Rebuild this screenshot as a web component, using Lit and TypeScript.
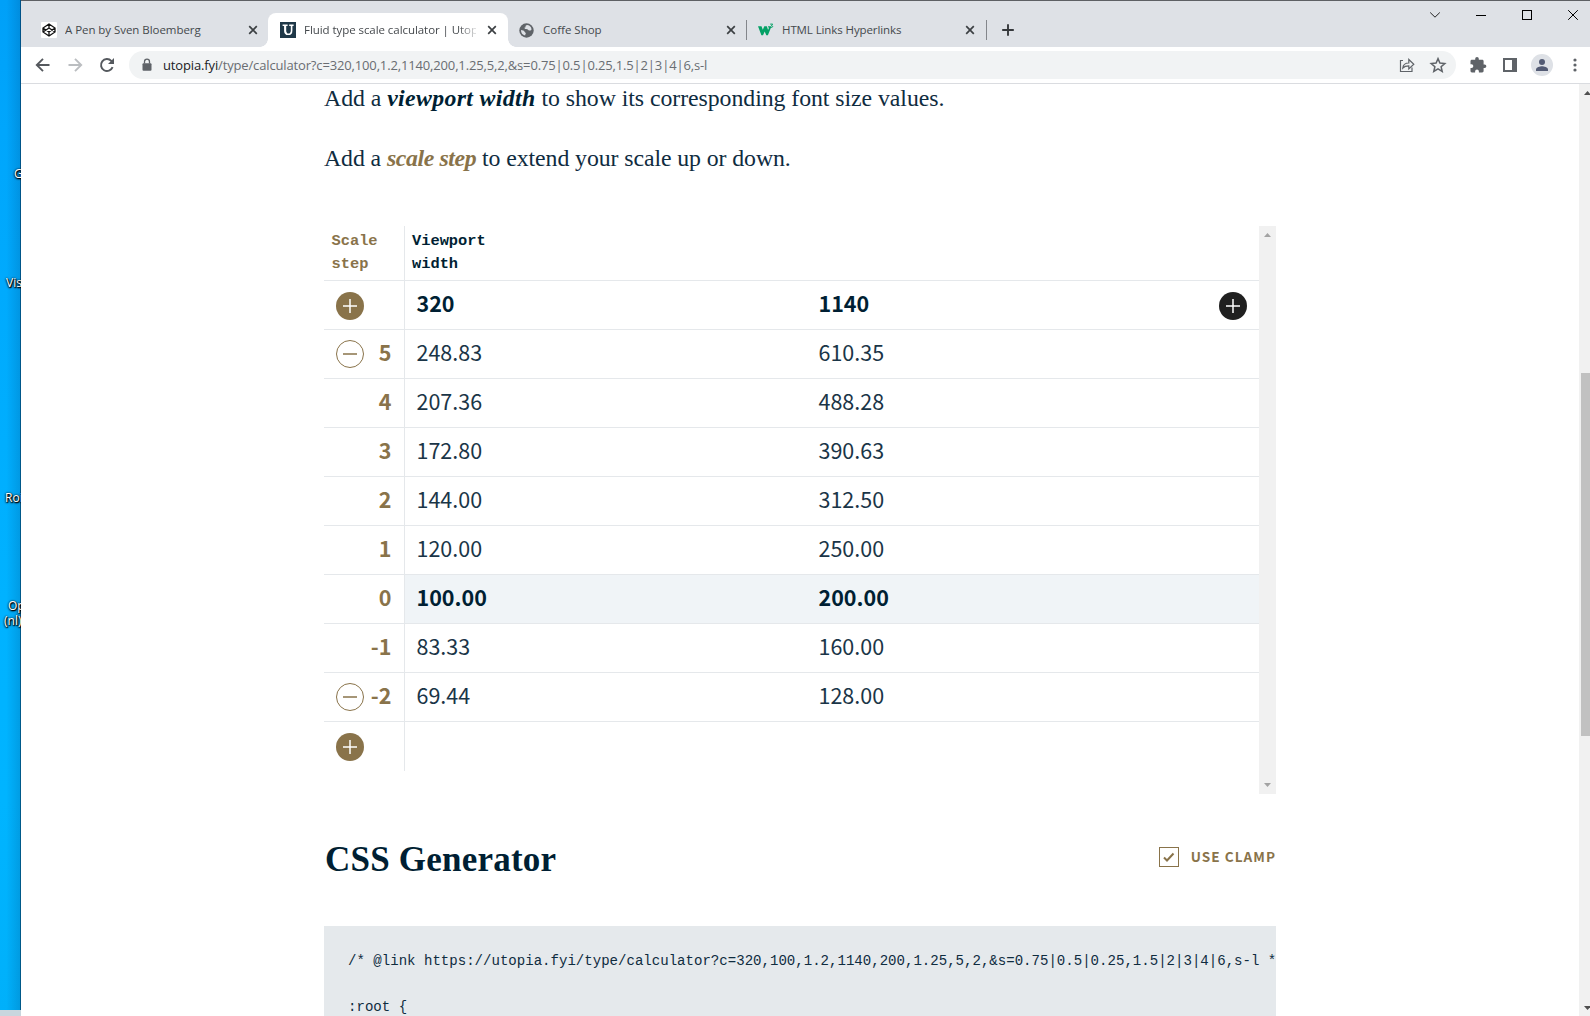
import { LitElement, html, css, svg, nothing } from "lit";
import { customElement, property } from "lit/decorators.js";
import { classMap } from "lit/directives/class-map.js";

const LINK = "/* @link https://utopia.fyi/type/calculator?c=320,100,1.2,1140,200,1.25,5,2,&s=0.75|0.5|0.25,1.5|2|3|4|6,s-l */";

interface Step { step: string; min: string; max: string; removable?: boolean; base?: boolean }

const STEPS: Step[] = [
  { step: "5", min: "248.83", max: "610.35", removable: true },
  { step: "4", min: "207.36", max: "488.28" },
  { step: "3", min: "172.80", max: "390.63" },
  { step: "2", min: "144.00", max: "312.50" },
  { step: "1", min: "120.00", max: "250.00" },
  { step: "0", min: "100.00", max: "200.00", base: true },
  { step: "-1", min: "83.33", max: "160.00" },
  { step: "-2", min: "69.44", max: "128.00", removable: true },
];

const closeIcon = html`<svg class="close" width="10" height="10" viewBox="0 0 10 10"><path d="M1.2 1.2 8.8 8.8M8.8 1.2 1.2 8.8" stroke="#3c4043" stroke-width="1.7"/></svg>`;

@customElement("desktop-strip")
class DesktopStrip extends LitElement {
  static styles = css`
    :host { display: block; position: relative; width: 21px; height: 1016px; overflow: hidden; flex: none;
      background: linear-gradient(90deg, transparent 30%, rgba(0, 40, 90, .16) 95%, rgba(0, 30, 60, .6) 96%),
        linear-gradient(180deg, #00a0f8 0, #00a6fc 130px, #00b2ff 600px, #00b4ff 800px, #00b0fa 1016px); }
    .label { position: absolute; font: 12px/15px "Open Sans", "Noto Sans", sans-serif; color: #fff; white-space: nowrap;
      text-shadow: 0 1px 2px #000, 0 0 2px #000, 1px 1px 1px #000; }
    .g { left: 14px; top: 166px; }
    .vis { left: 6px; top: 275px; }
    .ro { left: 5px; top: 490px; }
    .op { left: 8px; top: 598px; }
    .nl { left: 4px; top: 613px; }
    .bar { position: absolute; left: 0; right: 0; bottom: 0; height: 6px; background: #c9d6de; }
  `;
  render() {
    return html`<span class="label g">G</span><span class="label vis">Vis</span><span class="label ro">Roi</span>
      <span class="label op">Op</span><span class="label nl">(nl)</span><div class="bar"></div>`;
  }
}

@customElement("browser-chrome")
class BrowserChrome extends LitElement {
  static styles = css`
    :host { display: block; font-family: "Open Sans", "Noto Sans", sans-serif; }
    svg { display: block; flex: none; }
    .strip { height: 47px; box-sizing: border-box; border-top: 1px solid #5e6064; background: #dee1e6; display: flex; align-items: stretch; }
    .tabs { display: flex; padding-top: 12px; padding-left: 6px; }
    .tab { position: relative; display: flex; align-items: center; box-sizing: border-box; width: 241px; height: 34px; padding: 0 10px 0 14px; color: #45494d; font-size: 11.5px; }
    .tab.active { background: #fff; border-radius: 8px 8px 0 0; width: 240px; padding: 0 11px 0 12px; }
    .tab.active::before, .tab.active::after { content: ""; position: absolute; bottom: 0; width: 8px; height: 8px; }
    .tab.active::before { left: -8px; background: radial-gradient(circle at 0 0, transparent 7.5px, #fff 8px); }
    .tab.active::after { right: -8px; background: radial-gradient(circle at 100% 0, transparent 7.5px, #fff 8px); }
    .tab.third { width: 238px; padding: 0 10px 0 11px; }
    .tab.fourth { width: 239px; padding: 0 11px 0 11px; }
    .title { flex: 1; min-width: 0; margin-left: 8px; margin-right: 5px; overflow: hidden; white-space: nowrap; line-height: 20px; }
    .first .title { letter-spacing: -.05px; }
    .active .title { margin-right: 11px; letter-spacing: -.06px; -webkit-mask-image: linear-gradient(90deg, #000 154px, transparent 176px); }
    .third .title { margin-left: 9px; }
    .fourth .title { letter-spacing: -.1px; }
    .sep { width: 1px; height: 20px; align-self: center; background: #83868b; }
    .plus { margin: 11px 0 0 15px; }
    .spacer { flex: 1; }
    .controls { display: flex; gap: 36px; padding: 9px 12px 0 0; height: 10px; }
    .bar { height: 37px; box-sizing: border-box; border-bottom: 1px solid #dadce0; background: #fff; display: flex; align-items: center; }
    .nav { display: flex; gap: 12px; padding-left: 12px; width: 96px; }
    .omni { box-sizing: border-box; width: 1327px; height: 28px; border-radius: 14px; background: #f1f3f4; display: flex; align-items: center; padding: 0 8px 0 12px; }
    .url { flex: 1; margin-left: 10px; font-size: 13px; letter-spacing: -.145px; color: #696d72; white-space: nowrap; line-height: 20px; }
    .url b { font-weight: 400; color: #202124; }
    .omni .star { margin-left: 12px; }
    .tools { display: flex; align-items: center; padding-left: 12px; }
    .avatar { width: 22px; height: 22px; margin: 0 10px 0 13px; }
    .panel { margin-left: 14px; }
    .menu { margin-left: 9px; }
  `;
  render() {
    return html`
      <div class="strip">
        <div class="tabs">
          <div class="tab first">
            <svg width="16" height="16" viewBox="0 0 16 16"><rect width="16" height="16" rx="1" fill="#fff"/><g fill="none" stroke="#111" stroke-width="1.3"><path d="M8 2 14 6v4L8 14 2 10V6ZM2 6l6 4 6-4M2 10l6-4 6 4M8 2v4M8 10v4"/></g></svg>
            <span class="title">A Pen by Sven Bloemberg</span>${closeIcon}
          </div>
          <div class="tab active">
            <svg width="16" height="16" viewBox="0 0 16 16"><rect width="16" height="16" fill="#1f3848"/><path d="M2.6 3.2h5M9.2 3.2h4.4M5 3v5.4c0 2.7 1 3.9 3.2 3.9s3.4-1.2 3.400-3.900V3" fill="none" stroke="#fff" stroke-width="1.6"/><path d="M5.3 3v6c0 1.7.7 2.6 1.8 3" fill="none" stroke="#fff" stroke-width="1.8"/></svg>
            <span class="title">Fluid type scale calculator | Utopia</span>${closeIcon}
          </div>
          <div class="tab third">
            <svg width="15" height="15" viewBox="0 0 15 15"><circle cx="7.5" cy="7.5" r="7.2" fill="#5f6368"/><path d="M8.2 1.9c-1.3.4-2 .9-1.7 1.6.5.6-.2 1-.9 1.1-.5.9.3 1.5 1.6 1.5 1.5 0 1.9.9 2.7 1.4.8.3 1.4 0 2.5-.6.5-2.1-1.3-4.7-4.2-5ZM2 6.900c1.400.2 3 .5 3.400 1.500.4 1 1.100 1 1.400 1.600.2.9-.6 1.300-.7 2.400C3.700 12 1.800 9.700 2 6.900Z" fill="#dee1e6"/></svg>
            <span class="title">Coffe Shop</span>${closeIcon}
          </div>
          <div class="sep"></div>
          <div class="tab fourth">
            <svg width="16" height="14" viewBox="0 0 16 14"><path d="M0 3.300h3.500l1.300 3.500 1.500-3.500h2.500l1.300 3.700.8-1.900L9.800 3.300h3.700L9.900 12.200H8.300L6.700 8.500 5 12.200H3.400Z" fill="#04a166"/><path d="M12.200 1.100h2.500l-1.300 1.500c2 .1 1.600 2.300-.9 1.900" fill="none" stroke="#04a166" stroke-width="1"/></svg>
            <span class="title">HTML Links Hyperlinks</span>${closeIcon}
          </div>
          <div class="sep"></div>
          <svg class="plus" width="12" height="12" viewBox="0 0 12 12"><path d="M6 .2v11.600M.2 6h11.600" stroke="#35383b" stroke-width="1.900"/></svg>
        </div>
        <div class="spacer"></div>
        <div class="controls">
          <svg width="10" height="10" viewBox="0 0 10 10"><path d="M.2 2.500 5 7.200 9.800 2.500" fill="none" stroke="#222"/></svg>
          <svg width="10" height="10" viewBox="0 0 10 10"><path d="M0 5.500h10" stroke="#000"/></svg>
          <svg width="10" height="10" viewBox="0 0 10 10"><rect x=".5" y=".5" width="9" height="9" fill="none" stroke="#000"/></svg>
          <svg width="10" height="10" viewBox="0 0 10 10"><path d="M.2.2 9.800 9.800M9.800.2.2 9.800" stroke="#000"/></svg>
        </div>
      </div>
      <div class="bar">
        <div class="nav">
          <svg width="20" height="20" viewBox="0 0 20 20"><path d="M16.500 10H4.500M10 3.800 3.800 10l6.200 6.200" fill="none" stroke="#55595e" stroke-width="1.900"/></svg>
          <svg width="20" height="20" viewBox="0 0 20 20"><path d="M3.500 10h12M10 3.800l6.200 6.200-6.200 6.200" fill="none" stroke="#bbbec1" stroke-width="1.900"/></svg>
          <svg width="20" height="20" viewBox="0 0 20 20"><path d="M15.600 12.200A6 6 0 1 1 14.300 5.800L15.500 7" fill="none" stroke="#55595e" stroke-width="1.900"/><path d="M17 3v6h-6Z" fill="#55595e"/></svg>
        </div>
        <div class="omni">
          <svg width="12" height="14" viewBox="0 0 12 14"><rect x="1.500" y="5.200" width="9" height="7.600" rx="1" fill="#5f6368"/><path d="M3.500 5.500V3.700a2.500 2.500 0 0 1 5 0v1.800" fill="none" stroke="#5f6368" stroke-width="1.300"/></svg>
          <span class="url"><b>utopia.fyi</b>/type/calculator?c=320,100,1.2,1140,200,1.25,5,2,&amp;s=0.75|0.5|0.25,1.5|2|3|4|6,s-l</span>
          <svg width="18" height="18" viewBox="0 0 18 18"><path d="M5 4.500H2.500v11h11.500v-4M4.800 12C5.200 8.600 7.600 7 10.800 7V3.500L15.800 8.300l-5 4.600V9.800c-2.600 0-4.500.5-6 2.200Z" fill="none" stroke="#5f6368" stroke-width="1.200"/></svg>
          <svg class="star" width="20" height="20" viewBox="0 0 20 20"><path d="m10 3.600 1.900 4.500 4.900.4-3.700 3.200 1.100 4.700-4.200-2.500-4.200 2.500 1.100-4.700-3.700-3.200 4.900-.4Z" fill="none" stroke="#5f6368" stroke-width="1.500"/></svg>
        </div>
        <div class="tools">
          <svg width="20" height="20" viewBox="0 0 20 20"><path d="M16.600 9.600h-1V6.100c0-.8-.6-1.400-1.400-1.400h-3.400v-.9a1.800 1.800 0 0 0-3.600 0v.9H3.900c-.8 0-1.400.6-1.400 1.300v3.200h1a1.800 1.800 0 0 1 0 3.700h-1V16c0 .8.600 1.400 1.400 1.400h3.200v-1a1.900 1.900 0 0 1 3.800 0v1h3.300c.8 0 1.400-.6 1.400-1.400v-2.900h1a1.750 1.750 0 0 0 0-3.500Z" fill="#5f6368"/></svg>
          <svg class="panel" width="16" height="14" viewBox="0 0 16 14"><path d="M1 0h14v14H1ZM3 2v10h7V2Z" fill="#5f6368" fill-rule="evenodd"/></svg>
          <svg class="avatar" viewBox="0 0 22 22"><circle cx="11" cy="11" r="11" fill="#dee1e6"/><circle cx="11" cy="8" r="3" fill="#535b74"/><path d="M5 17v-1.700c0-2 4-3.100 6-3.100s6 1.100 6 3.100V17Z" fill="#535b74"/></svg>
          <svg class="menu" width="6" height="14" viewBox="0 0 6 14"><g fill="#5f6368"><circle cx="3" cy="2" r="1.600"/><circle cx="3" cy="7" r="1.600"/><circle cx="3" cy="12" r="1.600"/></g></svg>
        </div>
      </div>`;
  }
}

@customElement("round-button")
class RoundButton extends LitElement {
  @property() kind = "add";
  @property() tone = "gold";
  static styles = css`:host { display: block; width: 28px; height: 28px; } svg { display: block; }`;
  render() {
    const ink = this.tone === "dark" ? "#202020" : "#89734a";
    const add = this.kind === "add";
    return html`<svg width="28" height="28" viewBox="0 0 28 28">
      <circle cx="14" cy="14" r=${add ? 14 : 13.5} fill=${add ? ink : "none"} stroke=${add ? "none" : ink}></circle>
      <path d="M7 14h14" stroke=${add ? "#fff" : ink} stroke-width="1.500"></path>
      ${add ? svg`<path d="M14 7v14" stroke="#fff" stroke-width="1.500"></path>` : nothing}
    </svg>`;
  }
}

@customElement("scale-table")
class ScaleTable extends LitElement {
  static styles = css`
    :host { display: flex; width: 952px; height: 568px; font-family: "Noto Sans CJK JP", "Noto Sans", sans-serif; color: #001f33; }
    .grid { width: 935px; }
    .row { display: grid; grid-template-columns: 81px 402px 1fr; height: 49px; box-sizing: border-box; }
    .cell { border-bottom: 1px solid #e5e8eb; box-sizing: border-box; display: flex; align-items: center; padding: 0 0 3px 11.500px; font-size: 21.500px; line-height: 40px; font-weight: 400; color: #1a3547; }
    .cell span { margin-bottom: 2px; }
    .step { border-right: 1px solid #e5e8eb; color: #89734a; font-weight: 700; padding: 0 12.500px 3px 12px; justify-content: space-between; }
    .step span { margin-left: auto; }
    .bold { font-weight: 700; color: #001f33; }
    .head { height: 55px; }
    .head .cell { font: 700 15.360px/23px "Liberation Mono", monospace; padding: 4px 0 0 7px; align-items: flex-start; color: #001f33; }
    .head .cell.step { color: #89734a; padding-left: 7.500px; }
    .base .cell:not(.step) { background: #f0f4f7; font-weight: 700; color: #001f33; }
    .last .cell { border-bottom: 0; }
    .end { justify-content: space-between; padding-right: 12px; }
    round-button { margin-top: 4px; }
    round-button.remove { margin-top: 2px; }
    .track { width: 17px; background: #f1f1f1; display: flex; flex-direction: column; justify-content: space-between; align-items: center; padding: 7px 0; box-sizing: border-box; }
    .track svg { display: block; }
  `;
  render() {
    return html`
      <div class="grid">
        <div class="row head"><div class="cell step">Scale<br>step</div><div class="cell">Viewport<br>width</div><div class="cell"></div></div>
        <div class="row"><div class="cell step"><round-button></round-button></div><div class="cell bold"><span>320</span></div>
          <div class="cell bold end"><span>1140</span><round-button tone="dark"></round-button></div></div>
        ${STEPS.map((s) => html`<div class=${classMap({ row: true, base: !!s.base })}>
          <div class="cell step">${s.removable ? html`<round-button class="remove" kind="remove"></round-button>` : nothing}<span>${s.step}</span></div>
          <div class="cell"><span>${s.min}</span></div><div class="cell"><span>${s.max}</span></div></div>`)}
        <div class="row last"><div class="cell step"><round-button></round-button></div><div class="cell"></div><div class="cell"></div></div>
      </div>
      <div class="track">
        <svg width="7" height="4" viewBox="0 0 7 4"><path d="M0 4 3.500 0 7 4Z" fill="#a3a3a3"/></svg>
        <svg width="7" height="4" viewBox="0 0 7 4"><path d="M0 0h7L3.500 4Z" fill="#a3a3a3"/></svg>
      </div>`;
  }
}

@customElement("app-root")
class AppRoot extends LitElement {
  static styles = css`
    :host { display: flex; width: 1590px; height: 1016px; overflow: hidden; background: #fff; }
    .window { width: 1569px; height: 1016px; display: flex; flex-direction: column; overflow: hidden; background: #fff; }
    .view { flex: 1; min-height: 0; display: flex; }
    .page { flex: 1; min-width: 0; padding-left: 303px; overflow: hidden; color: #001f33; }
    .lead { margin: 0; height: 60px; font: 23.800px/28px "Liberation Serif", serif; letter-spacing: -.05px; white-space: nowrap; color: #0f2c3f; }
    .lead em { font-weight: 700; letter-spacing: .35px; color: #001f33; }
    .lead .gold { color: #89734a; letter-spacing: -.4px; }
    .lead.second { letter-spacing: -.08px; }
    .intro { height: 142px; }
    .title { width: 952px; display: flex; justify-content: space-between; align-items: center; height: 132px; }
    h2 { margin: 0 0 0 1px; font: 700 35px/44px "Liberation Serif", serif; letter-spacing: .22px; white-space: nowrap; }
    .clamp { display: flex; align-items: center; gap: 12px; color: #89734a; font: 700 13.600px/20px "Noto Sans CJK JP", "Noto Sans", sans-serif; letter-spacing: 1.020px; margin-top: -6px; }
    .clamp svg { display: block; }
    .clamp span { margin-top: -2px; }
    pre { margin: 0; width: 952px; height: 200px; box-sizing: border-box; padding: 24px 0 0 24px; overflow: hidden; background: #e5e9ec; font: 14.070px/23px "Liberation Mono", monospace; color: #0f2c3f; }
    .scroll { width: 11px; box-sizing: border-box; background: #f1f1f1; display: flex; flex-direction: column; overflow: hidden; padding: 7px 0 6px; }
    .scroll svg { display: block; margin-left: 5px; flex: none; }
    .thumb { height: 363px; margin-left: 2px; background: #c1c1c1; margin-top: 278px; }
    .fill { flex: 1; }
  `;
  render() {
    return html`
      <desktop-strip></desktop-strip>
      <div class="window">
        <browser-chrome></browser-chrome>
        <div class="view">
          <main class="page">
            <div class="intro">
              <p class="lead">Add a <em>viewport width</em> to show its corresponding font size values.</p>
              <p class="lead second">Add a <em class="gold">scale step</em> to extend your scale up or down.</p>
            </div>
            <scale-table></scale-table>
            <div class="title">
              <h2>CSS Generator</h2>
              <div class="clamp"><svg width="20" height="20" viewBox="0 0 20 20"><rect x=".5" y=".5" width="19" height="19" fill="none" stroke="#89734a"/><path d="m5 10.500 3 3 6.500-7" fill="none" stroke="#89734a" stroke-width="2"/></svg><span>USE CLAMP</span></div>
            </div>
            <pre>${LINK}

:root {</pre>
          </main>
          <div class="scroll">
            <svg width="7" height="4" viewBox="0 0 7 4"><path d="M0 4 3.500 0 7 4Z" fill="#505050"/></svg>
            <div class="thumb"></div><div class="fill"></div>
            <svg width="7" height="4" viewBox="0 0 7 4"><path d="M0 0h7L3.500 4Z" fill="#505050"/></svg>
          </div>
        </div>
      </div>`;
  }
}
